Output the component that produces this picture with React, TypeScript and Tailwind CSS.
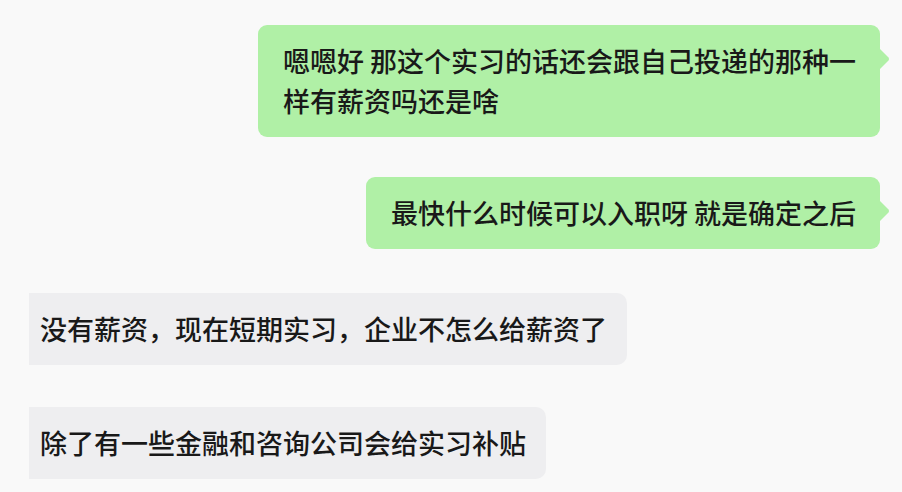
const FONT = "font-['Noto_Sans_CJK_SC','Noto_Sans',sans-serif]";

type Msg = { side: "me" | "them"; text: string; box?: string; gap: string };

const MESSAGES: Msg[] = [
  {
    side: "me",
    text: "嗯嗯好 那这个实习的话还会跟自己投递的那种一样有薪资吗还是啥",
    box: "w-[622px] pr-[14px]",
    gap: "mt-[25px]",
  },
  { side: "me", text: "最快什么时候可以入职呀 就是确定之后", gap: "mt-[40px]" },
  { side: "them", text: "没有薪资，现在短期实习，企业不怎么给薪资了", gap: "mt-[44px]" },
  { side: "them", text: "除了有一些金融和咨询公司会给实习补贴", gap: "mt-[42px]" },
];

function Tail() {
  return (
    <svg
      className="absolute top-[23px] -right-[10px]"
      width="11"
      height="22"
      viewBox="0 0 11 22"
    >
      <path d="M0 0 L9.5 9.6 Q10.8 11 9.5 12.4 L0 22 Z" fill="#b0f0a6" />
    </svg>
  );
}

function Bubble({ msg }: { msg: Msg }) {
  if (msg.side === "me") {
    return (
      <div className={`flex justify-end pr-[22px] ${msg.gap}`}>
        <div
          className={`relative rounded-[9px] bg-[#b0f0a6] py-[16px] pl-[25px] text-[27px] font-medium leading-[40px] text-[#191919] ${msg.box ?? "pr-[24px]"}`}
        >
          {msg.text}
          <Tail />
        </div>
      </div>
    );
  }
  return (
    <div className={`flex justify-start pl-[29px] ${msg.gap}`}>
      <div className="rounded-r-[10px] bg-[#eeeef0] py-[16px] pl-[11px] pr-[20px] text-[27px] font-medium leading-[40px] text-[#191919]">
        {msg.text}
      </div>
    </div>
  );
}

export default function App() {
  return (
    <div className={`h-[492px] w-[902px] overflow-hidden bg-[#f9f9f9] ${FONT}`}>
      {MESSAGES.map((m, i) => (
        <Bubble key={i} msg={m} />
      ))}
    </div>
  );
}
